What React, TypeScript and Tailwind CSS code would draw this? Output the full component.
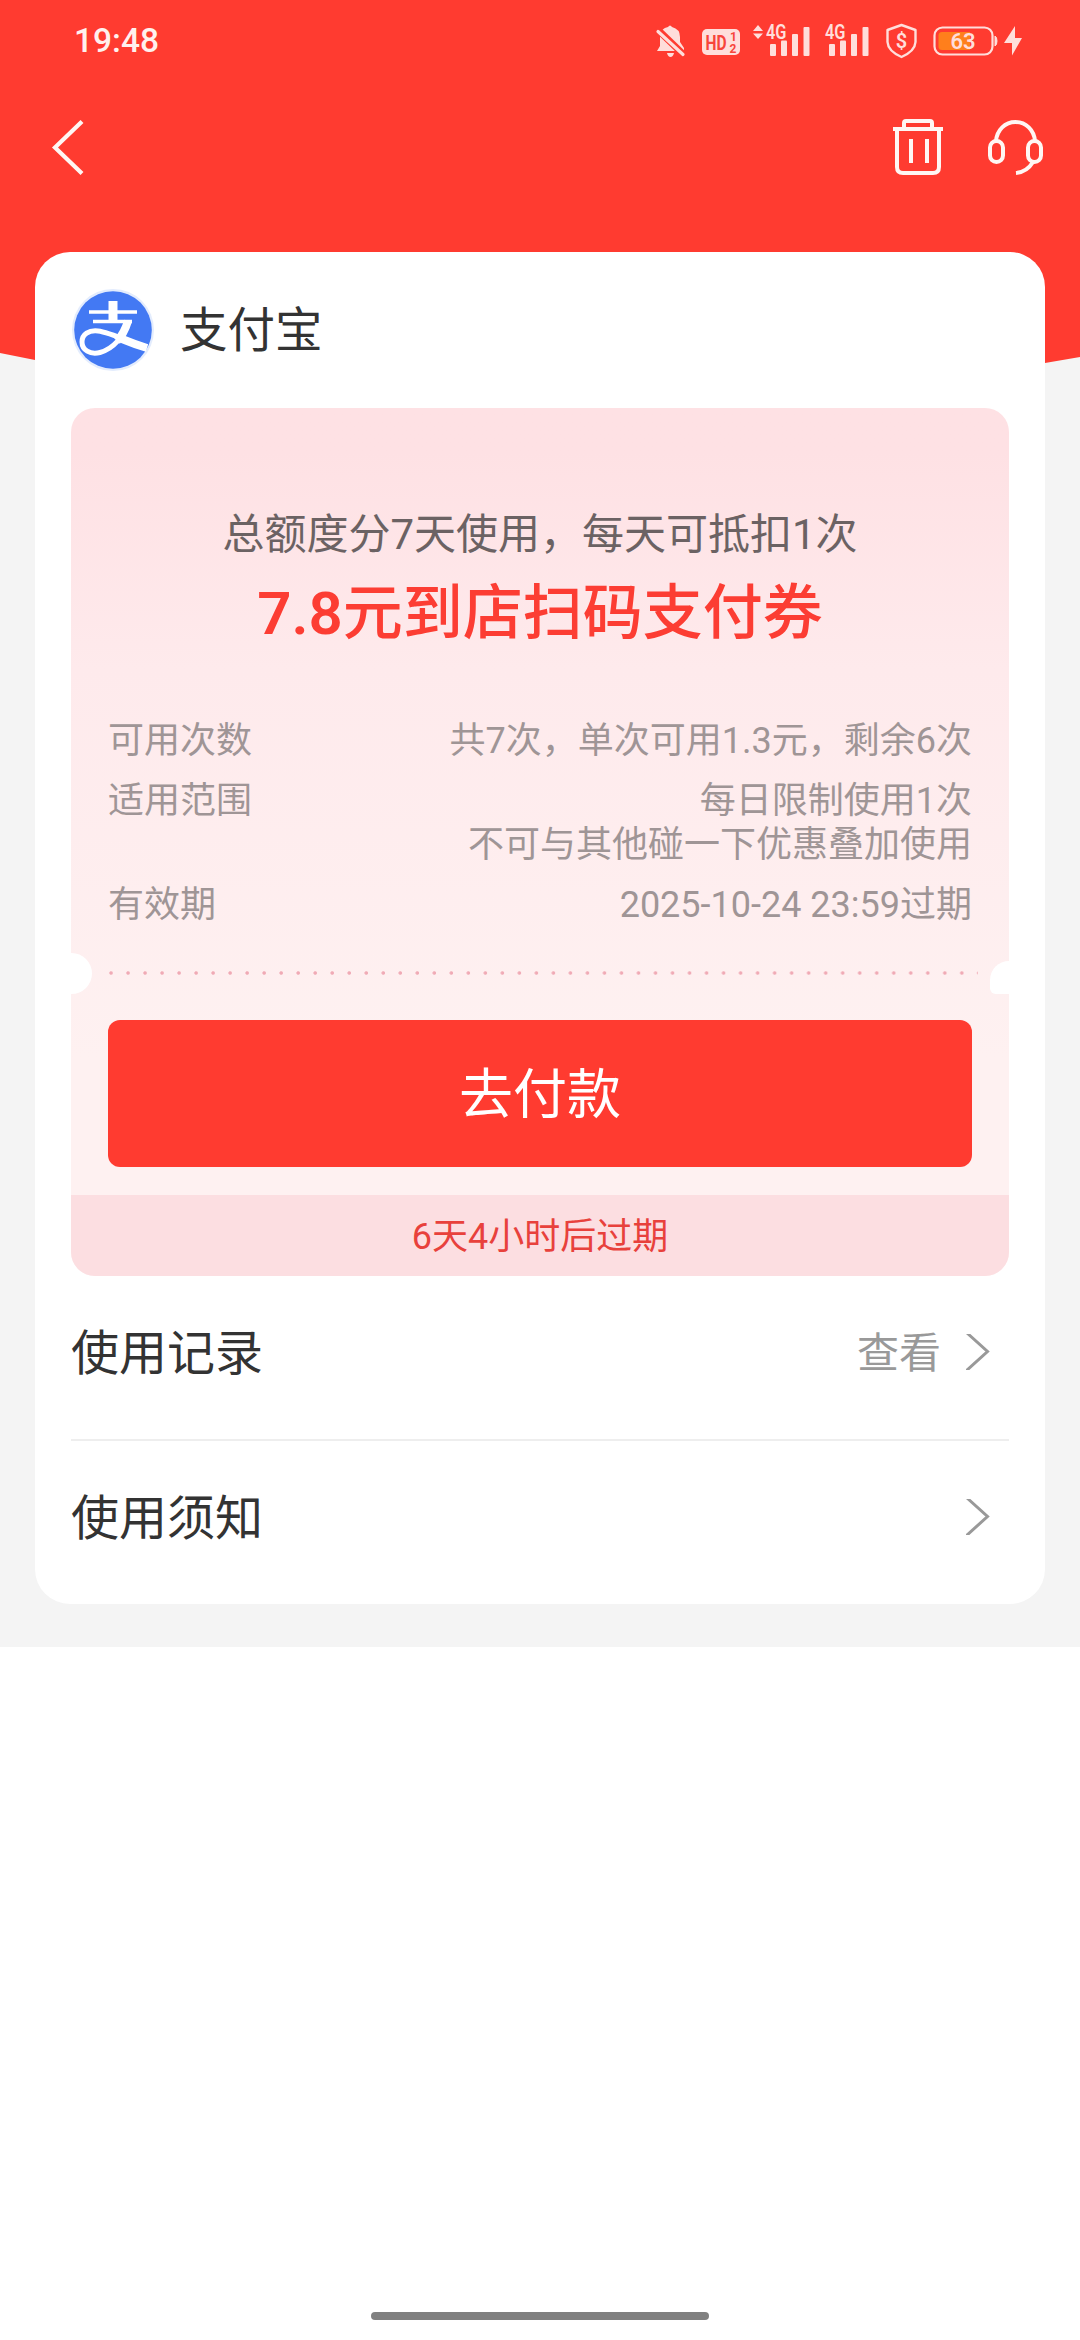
import React from "react";

function StatusBar() {
  return (
    <div className="flex h-[82px] items-center justify-between pl-[74px] pr-[56px] text-[#ffdedb]">
      <span className="text-[33.5px] font-medium leading-none text-[#fff1ee]">19:48</span>
      <svg className="h-[60px] w-[384px]" viewBox="640 10 384 60" fill="currentColor">
        <path d="M660 45 V35 Q661 27 668 26 Q670 23 672 26 Q680 28 680 36 V41 L684 47 V50 H657 Z" />
        <path d="M667 52 H674 Q673 56 670.500 56 Q668 56 667 52 Z" />
        <path d="M656 27 L684 54" stroke="#ff3b30" strokeWidth="7" />
        <path d="M658 30.500 L683 53.500" stroke="currentColor" strokeWidth="3.200" strokeLinecap="round" />
        <rect x="702" y="28" width="38" height="26" rx="5" />
        <text transform="translate(705.5 48.5) scale(0.74 1)" fontSize="21" fontWeight="700" fill="#f7453b">HD</text>
        <text x="730" y="40" fontSize="12" fontWeight="700" fill="#f7453b">1</text>
        <text x="729.500" y="51.500" fontSize="12" fontWeight="700" fill="#f7453b">2</text>
        <path d="M753 30 L758 24 L763 30 Z M753 32.500 L758 38 L763 32.500 Z" />
        <text transform="translate(766 38) scale(0.84 1)" fontSize="19.500" fontWeight="600">4G</text>
        <rect x="770" y="43" width="6" height="12" rx="1" />
        <rect x="781" y="39.500" width="6" height="15.500" rx="1" />
        <rect x="792" y="33" width="6" height="22" rx="1" />
        <rect x="803.500" y="26" width="6" height="29" rx="1" />
        <text transform="translate(825 38) scale(0.84 1)" fontSize="19.500" fontWeight="600">4G</text>
        <rect x="829" y="43" width="6" height="12" rx="1" />
        <rect x="840" y="39.500" width="6" height="15.500" rx="1" />
        <rect x="851" y="33" width="6" height="22" rx="1" />
        <rect x="862.500" y="26" width="6" height="29" rx="1" />
        <path d="M901.500 24 L915.500 29 V41 Q915 50 901.500 56 Q888 50 887.500 41 V29 Z" fill="none" stroke="currentColor" strokeWidth="2.400" strokeLinejoin="round" />
        <text x="901.500" y="47" fontSize="20" fontWeight="600" textAnchor="middle">$</text>
        <rect x="934.500" y="26.500" width="58" height="27" rx="8" fill="none" stroke="currentColor" strokeWidth="2.200" />
        <path d="M995 35 Q997 36 997 40 Q997 44 995 45 Z" stroke="currentColor" />
        <path d="M942 31 H970 V49 H942 Q938.500 49 938.500 45.500 V34.500 Q938.500 31 942 31 Z" fill="#ff7f1c" />
        <text x="963" y="48" fontSize="22" fontWeight="600" textAnchor="middle">63</text>
        <path d="M1015 25 L1004 42 H1012 L1012 54.500 L1022 37 H1015 Z" />
      </svg>
    </div>
  );
}

function NavBar() {
  return (
    <div className="flex h-[170px] items-start justify-between pl-[48px] pr-[33px] pt-[35px] text-[#fff6f3]">
      <svg className="h-[60px] w-[40px]" viewBox="48 117 40 60" fill="none" stroke="currentColor" strokeWidth="4.200">
        <path d="M82 121.500 L55 147.500 L82 173.500" />
      </svg>
      <div className="flex gap-[36px]">
        <svg className="h-[60px] w-[60px]" viewBox="888 117 60 60" fill="none" stroke="currentColor" strokeWidth="4">
          <path d="M893 129 H943" />
          <path d="M904 129 V123 Q904 121 906 121 H930 Q932 121 932 123 V129" />
          <path d="M897 129 V167 Q897 173 903 173 H933 Q939 173 939 167 V129" />
          <path d="M911 139 V163 M927 139 V163" />
        </svg>
        <svg className="h-[60px] w-[63px]" viewBox="984 117 63 60" fill="none" stroke="currentColor" strokeWidth="4">
          <rect x="990" y="141" width="13" height="21" rx="6.500" />
          <rect x="1028" y="141" width="13" height="21" rx="6.500" />
          <path d="M996 141 C997 130 1005 122 1015.500 122 C1026 122 1034 130 1035 141" />
          <path d="M1033 162 Q1027 172 1016 173" />
        </svg>
      </div>
    </div>
  );
}

function AlipayLogo() {
  return (
    <svg className="h-[84px] w-[84px]" viewBox="71 288 84 84">
      <circle cx="113" cy="330" r="41" fill="#e3ecfd" />
      <circle cx="113" cy="330" r="38.800" fill="#4379f3" />
      <g fill="none" stroke="#fff">
        <path d="M113 301 V321" strokeWidth="9" />
        <path d="M89 312 H137" strokeWidth="3.600" />
        <path d="M93 321.500 H132" strokeWidth="3.600" />
        <path d="M128 321 C124 337 113 349 100 352.500 C90 355 82 350 82 342 C82 334 89 330 98 331 C108 332 118 337 146 348" strokeWidth="5" />
        <path d="M122 339 Q134 344 147 348" strokeWidth="8" />
        <path d="M128 321 Q124 334 117 341" strokeWidth="8" />
      </g>
    </svg>
  );
}

function Chevron() {
  return (
    <svg className="h-[36px] w-[24px]" viewBox="0 0 24 36" fill="none" stroke="#999" strokeWidth="3">
      <path d="M1 -1 L21.500 17.500 L0 37" />
    </svg>
  );
}

const details = [
  { label: "可用次数", lines: ["共7次，单次可用1.3元，剩余6次"] },
  { label: "适用范围", lines: ["每日限制使用1次", "不可与其他碰一下优惠叠加使用"] },
  { label: "有效期", lines: ["2025-10-24 23:59过期"] },
];

function Coupon() {
  return (
    <section className="mx-[36px] flex h-[868px] flex-col overflow-hidden rounded-[24px] bg-linear-to-b from-[#fee1e4] from-5% via-[#feeaec] via-30% to-[#fef1f1] to-75%">
      <div className="mt-[96px] text-center text-[42px] leading-[62px] text-[#6b6263]">
        总额度分7天使用，每天可抵扣1次
      </div>
      <h1 className="mt-[8px] text-center text-[60px] font-medium leading-[80px] text-[#fc3d33]">
        <span className="font-semibold">7.8</span>元到店扫码支付券
      </h1>
      <dl className="mt-[65px] flex flex-col gap-[16px] px-[37px] text-[36px] leading-[44px] text-[#9f9596]">
        {details.map((d) => (
          <div key={d.label} className="flex justify-between">
            <dt>{d.label}</dt>
            <dd className="text-right">
              {d.lines.map((l) => (
                <div key={l}>{l}</div>
              ))}
            </dd>
          </div>
        ))}
      </dl>
      <div className="mt-[25px] flex h-[42px] items-center">
        <span className="h-[41px] w-[21px] rounded-r-full bg-white" />
        <span className="ml-[16px] h-[4px] w-[870px] bg-[radial-gradient(circle_at_3px_2px,#f0aab5_1.3px,transparent_2.2px)] bg-size-[17.02px_4px]" />
        <span className="ml-auto mt-[8px] h-[33px] w-[19px] rounded-bl-[6px] rounded-tl-[20px] bg-white" />
      </div>
      <button className="mx-[37px] mt-[26px] h-[147px] shrink-0 rounded-[12px] bg-[#ff3b30] pt-[4px] text-[54px] leading-none text-white">去付款</button>
      <div className="mt-auto flex h-[81px] items-center justify-center bg-[#fcdee1] pt-[2px] text-[36px] text-[#e8413c]">6天4小时后过期</div>
    </section>
  );
}

function LinkRow({ label, value }: { label: string; value?: string }) {
  return (
    <div className="flex items-center text-[48px] leading-[60px] text-[#333]">
      <span className="flex-1 pt-[4px]">{label}</span>
      {value && <span className="mr-[25px] pt-[3px] text-[42px] text-[#999]">{value}</span>}
      <Chevron />
    </div>
  );
}

export default function App() {
  return (
    <div
      lang="zh-CN"
      className="flex h-[2340px] w-[1080px] flex-col overflow-hidden bg-white font-[Roboto,'Noto_Sans_CJK_SC',sans-serif]"
    >
      <div className="relative h-[1647px] bg-[#f4f4f4]">
        <div className="absolute inset-x-0 top-0 h-[380px] bg-[#ff3b30] [clip-path:polygon(0_0,100%_0,100%_357px,1045px_363px,900px_380px,180px_380px,35px_360px,0_353px)]" />
        <div className="relative">
          <StatusBar />
          <NavBar />
          <main className="mx-[35px] h-[1352px] rounded-[35px] bg-white">
            <header className="flex h-[156px] items-center gap-[25px] pl-[36px] text-[47.500px] leading-none text-[#333]">
              <AlipayLogo />
              <span className="pt-[3px]">支付宝</span>
            </header>
            <Coupon />
            <div className="mx-[36px] flex h-[165px] flex-col border-b-2 border-[#eee] pr-[19px] pt-[44px]">
              <LinkRow label="使用记录" value="查看" />
            </div>
            <div className="mx-[36px] pr-[19px] pt-[44px]">
              <LinkRow label="使用须知" />
            </div>
          </main>
        </div>
      </div>
      <div className="mx-auto mt-auto mb-[20px] h-[8px] w-[338px] rounded-full bg-[#808080]" />
    </div>
  );
}
